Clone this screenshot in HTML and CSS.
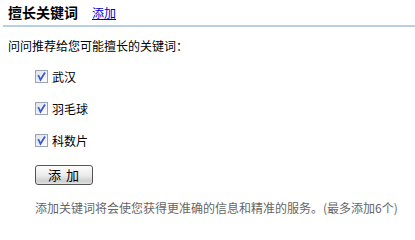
FILE: index.html
```html
<!DOCTYPE html>
<html lang="zh-CN">
<head>
<meta charset="utf-8">
<title>擅长关键词</title>
<link rel="stylesheet" href="styles.css">
</head>
<body>
<div class="header">
  <h2 class="title">擅长关键词</h2>
  <a class="add-link" href="#">添加</a>
</div>
<p class="intro">问问推荐给您可能擅长的关键词：</p>
<div class="list">
  <label class="row"><span class="cb"><svg viewBox="0 0 11 11" width="11" height="11"><path d="M2.2 4.2 L4.5 8.8 L9 1.5" fill="none" stroke="#3b5fd0" stroke-width="1.8"/></svg></span>武汉</label>
  <label class="row"><span class="cb"><svg viewBox="0 0 11 11" width="11" height="11"><path d="M2.2 4.2 L4.5 8.8 L9 1.5" fill="none" stroke="#3b5fd0" stroke-width="1.8"/></svg></span>羽毛球</label>
  <label class="row"><span class="cb"><svg viewBox="0 0 11 11" width="11" height="11"><path d="M2.2 4.2 L4.5 8.8 L9 1.5" fill="none" stroke="#3b5fd0" stroke-width="1.8"/></svg></span>科数片</label>
  <button class="btn" type="button">添 加</button>
</div>
<p class="note">添加关键词将会使您获得更准确的信息和精准的服务。(最多添加6个)</p>
</body>
</html>
```
FILE: styles.css
```css
body {
  margin: 0;
  font-family: "Noto Sans CJK SC", "Noto Sans", sans-serif;
  font-size: 12px;
  color: #000;
  background: #fff;
}
.header {
  margin-left: 3px;
  padding: 2px 0 0 5px;
  height: 23px;
  box-sizing: content-box;
  border-bottom: 2px solid #b8cfe6;
  display: flex;
  align-items: baseline;
  gap: 14px;
}
.title {
  margin: 0;
  font-size: 14px;
  font-weight: bold;
  line-height: 20px;
}
.add-link {
  color: #0000cc;
  text-decoration: underline;
  font-size: 12px;
}
.intro {
  margin: 11px 0 0 8px;
  line-height: 16px;
}
.list {
  margin: 6px 0 0 35px;
  display: flex;
  flex-direction: column;
  align-items: flex-start;
}
.row {
  height: 32px;
  display: flex;
  align-items: center;
  gap: 4px;
}
.cb {
  width: 11px;
  height: 11px;
  border: 1px solid #9aa4b2;
  background: linear-gradient(135deg, #dde1e8, #ffffff);
  display: flex;
}
.btn {
  margin-top: 9px;
  width: 58px;
  height: 20px;
  padding: 0;
  border: 1px solid #555;
  border-radius: 3px;
  background: linear-gradient(#fdfdfd, #ececec 50%, #cfcfcf 85%, #e4e4e4);
  font-family: inherit;
  font-size: 13px;
  line-height: 18px;
  letter-spacing: 1px;
  color: #000;
}
.note {
  margin: 15px 0 0 35px;
  line-height: 16px;
  color: #666;
}
```
